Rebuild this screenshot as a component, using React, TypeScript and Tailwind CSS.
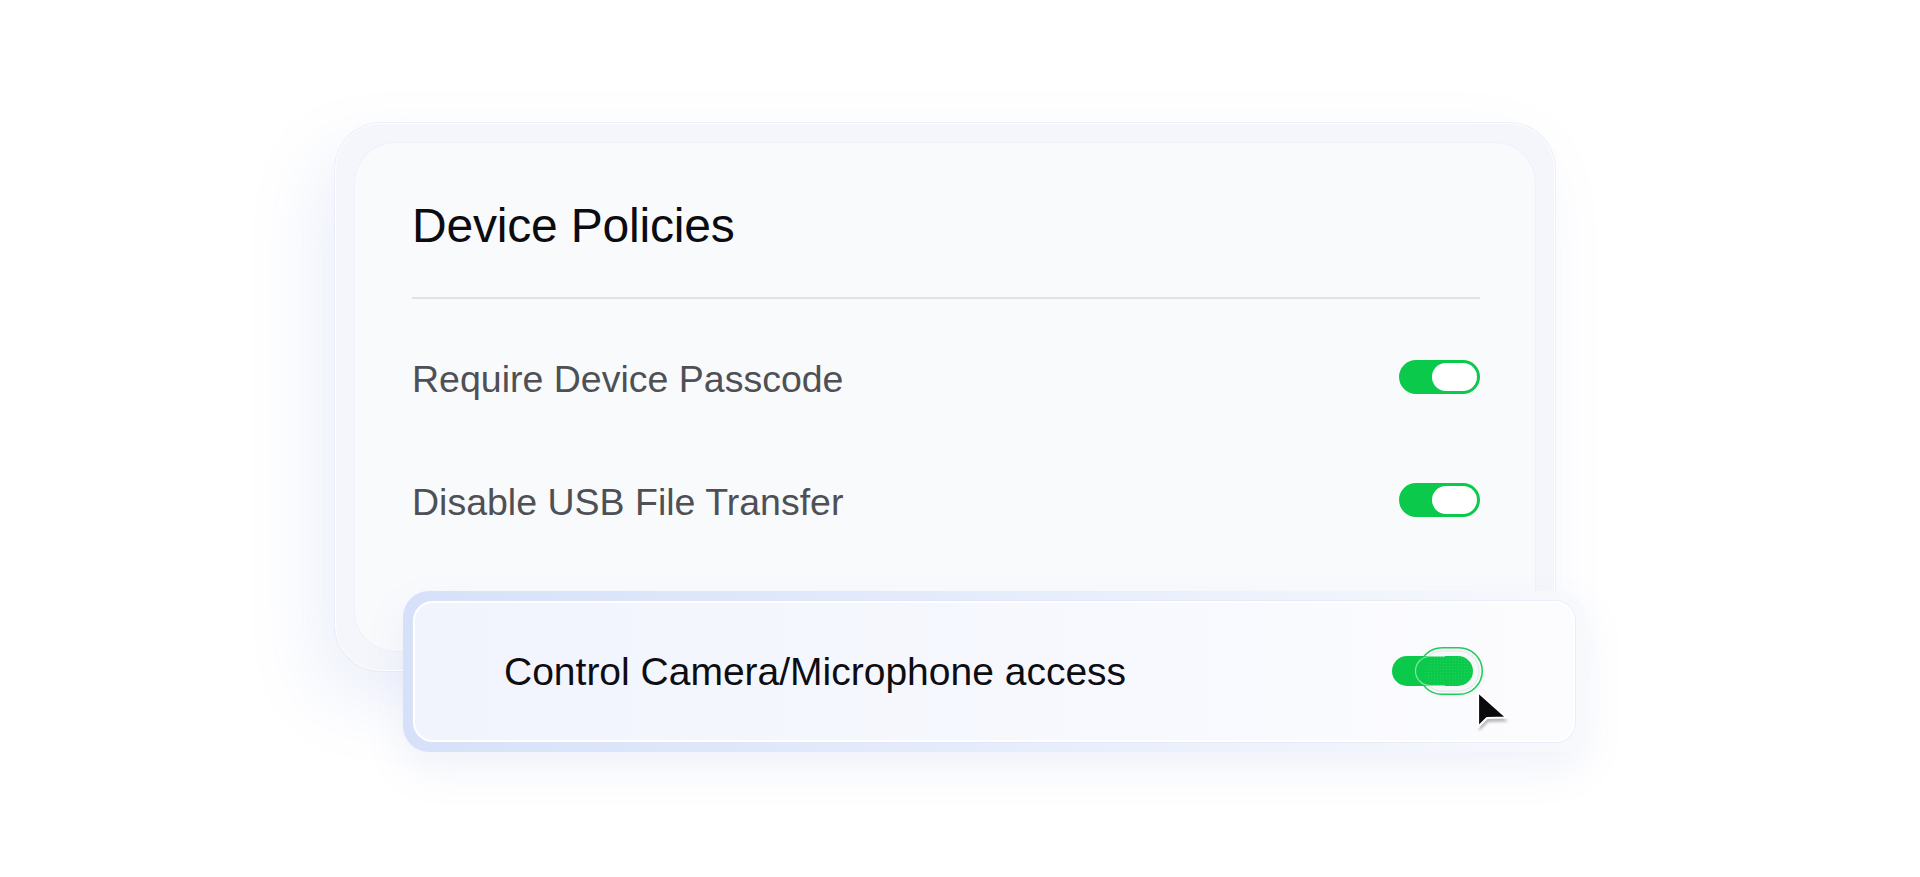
import React from "react";

function Toggle() {
  return (
    <div className="flex h-[34px] w-[81px] items-center justify-end rounded-full bg-[#0bca4b] pr-[3px]">
      <div className="h-[28px] w-[45px] rounded-full bg-white" />
    </div>
  );
}

function ActiveToggle() {
  return (
    <svg width="94" height="50" viewBox="0 0 94 50" className="overflow-visible">
      <defs>
        <pattern id="dots" width="3" height="3" patternUnits="userSpaceOnUse">
          <circle cx="1.5" cy="1.5" r="0.45" fill="#7fe29b" opacity="0.45" />
        </pattern>
        <filter id="ks" x="-20%" y="-30%" width="140%" height="160%">
          <feGaussianBlur stdDeviation="2" />
        </filter>
      </defs>
      <rect x="29" y="4" width="63" height="44" rx="22" fill="#9aa3b5" opacity="0.22" filter="url(#ks)" />
      <rect x="27.75" y="0.75" width="63.5" height="46.5" rx="23.25" fill="#f6f7f9" stroke="#1ccf57" strokeWidth="1.5" />
      <rect x="31" y="4" width="57" height="40" rx="20" fill="none" stroke="#e1e5ea" strokeWidth="1" />
      <rect x="1" y="9" width="81" height="30" rx="15" fill="#0bca4b" />
      <rect x="34" y="9" width="48" height="30" rx="15" fill="url(#dots)" />
      <path d="M54 9.5 H39 A14.5 14.5 0 0 0 39 38.5 H54" fill="none" stroke="#ffffff" strokeOpacity="0.5" strokeWidth="1.2" />
    </svg>
  );
}

function Cursor() {
  return (
    <svg width="36" height="42" viewBox="0 0 36 42">
      <defs>
        <filter id="cs" x="-40%" y="-40%" width="180%" height="180%">
          <feGaussianBlur stdDeviation="1.6" />
        </filter>
      </defs>
      <path d="M3 4 L3 39 L12 30 L32 29.5 Z" fill="#000" opacity="0.28" filter="url(#cs)" transform="translate(1 2)" />
      <path d="M3 2 L3 37 L12 28 L31.5 27.5 Z" fill="#0b0b0f" stroke="#ffffff" strokeWidth="2.2" strokeLinejoin="round" />
    </svg>
  );
}

export default function App() {
  return (
    <div className="h-[877px] w-[1920px] overflow-hidden bg-white font-['Liberation_Sans','Helvetica',Arial,sans-serif]">
      <div className="pl-[335px] pt-[123px]">
        <div className="relative w-[1220px]">
          <div className="h-[548px] w-[1220px] rounded-[46px] border-[1.5px] border-white bg-[#f4f6fb] p-[19px] shadow-[0_0_0_1px_rgba(228,232,245,0.6),-20px_30px_70px_rgba(110,130,225,0.12)]">
            <div className="flex h-full flex-col rounded-[40px] bg-[#f9fafc] pl-[57px] pr-[55px] pt-[59px] shadow-[0_0_0_1px_rgba(238,241,248,0.9)]">
              <h2 className="text-[48px] font-normal leading-none tracking-[-0.2px] text-[#0b0b10]">Device Policies</h2>
              <div className="mt-[47px] h-[2px] bg-[#dfe2e7]" />
              <div className="mt-[61px] flex h-[34px] items-center justify-between">
                <span className="pt-[6px] text-[37.5px] leading-none text-[#4f5055]">Require Device Passcode</span>
                <Toggle />
              </div>
              <div className="mt-[89px] flex h-[34px] items-center justify-between">
                <span className="pt-[6px] text-[37.5px] leading-none text-[#4f5055]">Disable USB File Transfer</span>
                <Toggle />
              </div>
            </div>
          </div>

          <div className="absolute left-[68px] top-[468px] h-[161px] w-[1182px] rounded-[26px] bg-gradient-to-r from-[#d6e1f9] via-[#e5ecfb] to-[#f8f9fc] p-[10px] shadow-[0_18px_40px_rgba(120,140,210,0.10)]">
            <div className="flex h-full items-center justify-between rounded-[20px] border-2 border-white bg-gradient-to-r from-[#f1f4fd] via-[#f6f8fe] to-[#fcfcfe] pl-[89px] pr-[88px] shadow-[0_0_0_1px_rgba(220,228,246,0.5)]">
              <span className="text-[39px] leading-none text-[#0d0d12]">Control Camera/Microphone access</span>
              <div className="h-[50px] w-[94px]">
                <ActiveToggle />
              </div>
            </div>
            <div className="absolute left-[1072px] top-[99px]">
              <Cursor />
            </div>
          </div>
        </div>
      </div>
    </div>
  );
}
